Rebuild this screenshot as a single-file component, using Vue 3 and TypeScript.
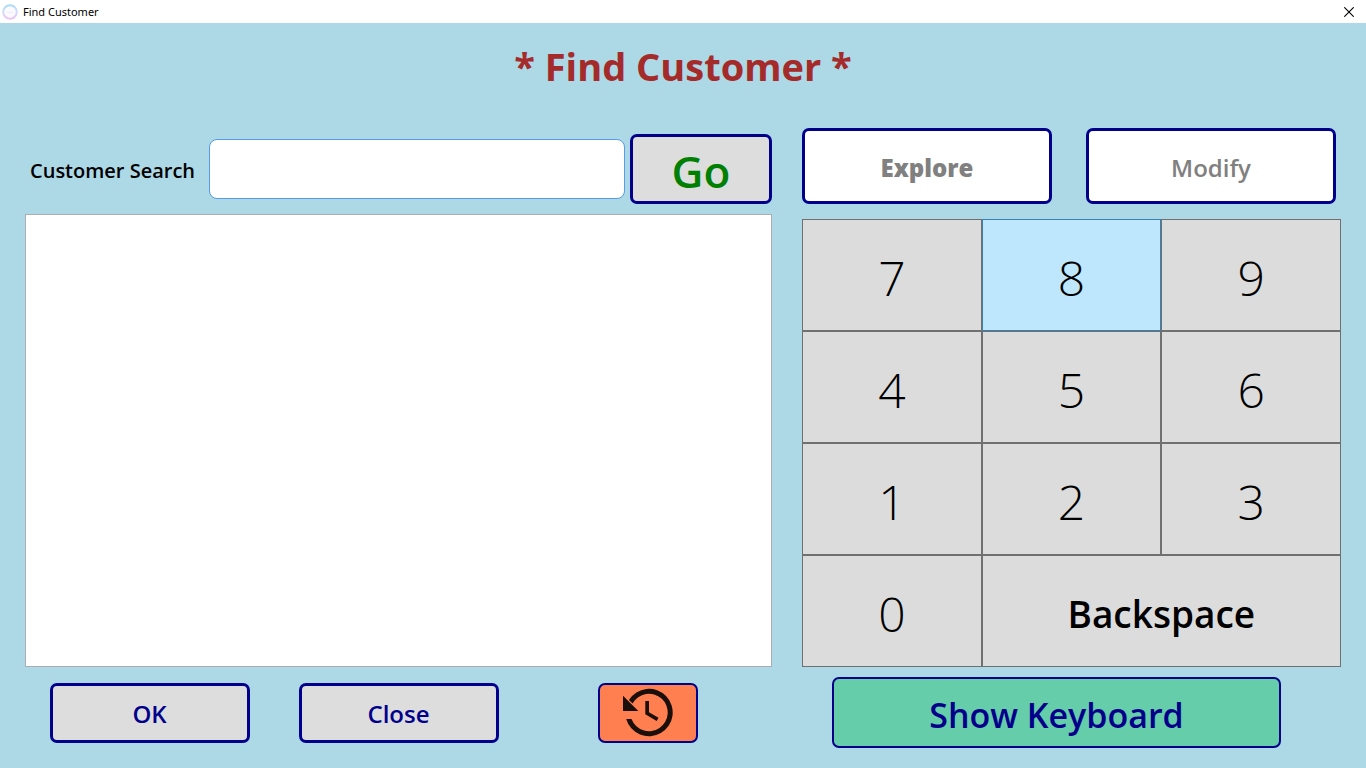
<script setup lang="ts">
import { ref } from 'vue'

const query = ref('')
const hoveredKey = ref('8')
const digits: string[] = ['7', '8', '9', '4', '5', '6', '1', '2', '3', '0']

function press(key: string): void {
  query.value += key
}

function backspace(): void {
  query.value = query.value.slice(0, -1)
}
</script>

<template>
  <div class="window">
    <header class="titlebar">
      <svg class="app-icon" viewBox="0 0 16 16" aria-hidden="true">
        <defs>
          <linearGradient id="ring" x1="0" y1="0" x2="0" y2="1">
            <stop offset="0" stop-color="#a9dcf8" />
            <stop offset="0.5" stop-color="#d3dcf8" />
            <stop offset="1" stop-color="#ecc6f5" />
          </linearGradient>
        </defs>
        <circle cx="8" cy="8" r="6.8" fill="#fcfaff" stroke="url(#ring)" stroke-width="2" />
        <path d="M5 8.5h6" stroke="#f1eefc" stroke-width="1.5" />
      </svg>
      <span class="caption">Find Customer</span>
      <button class="close-window" type="button" aria-label="Close window">
        <svg viewBox="0 0 10 10" aria-hidden="true">
          <path d="M0.3 0.3L9.7 9.7M9.7 0.3L0.3 9.7" stroke="#000" stroke-width="1.1" />
        </svg>
      </button>
    </header>

    <h1 class="heading">* Find Customer *</h1>

    <main class="content">
      <section class="search-panel">
        <form class="search-row" @submit.prevent>
          <label for="customer-search">Customer Search</label>
          <input id="customer-search" v-model="query" type="text" autocomplete="off" />
          <button class="framed go" type="submit">Go</button>
        </form>
        <div class="results" role="listbox" aria-label="Customers"></div>
        <div class="actions">
          <button class="framed action" type="button">OK</button>
          <button class="framed action" type="button">Close</button>
          <button class="framed history" type="button" aria-label="History">
            <svg viewBox="0 0 50 50" aria-hidden="true">
              <path d="M5.9 12A23.7 23.7 0 1 1 3.2 31H8.5A18.7 18.7 0 1 0 9.6 15.5Z" />
              <path d="M0 7.7L15.3 23H0Z" />
              <path d="M22.3 13H26V24.3L35.5 29.7L33.7 33L22.3 26.3Z" />
            </svg>
          </button>
        </div>
      </section>

      <section class="keypad-panel">
        <div class="modes">
          <button class="framed mode explore" type="button">Explore</button>
          <button class="framed mode" type="button">Modify</button>
        </div>
        <div class="keypad">
          <button
            v-for="digit in digits"
            :key="digit"
            class="key"
            :class="{ hovered: digit === hoveredKey }"
            type="button"
            @mouseenter="hoveredKey = digit"
            @click="press(digit)"
          >{{ digit }}</button>
          <button class="key backspace" type="button" @click="backspace">Backspace</button>
        </div>
        <button class="framed keyboard" type="button">Show Keyboard</button>
      </section>
    </main>
  </div>
</template>

<style>
body {
  margin: 0;
  background: #add8e6;
}
</style>

<style scoped>
.window {
  display: flex;
  flex-direction: column;
  min-height: 100vh;
  background: #add8e6;
  font-family: "Open Sans", "Noto Sans", sans-serif;
  color: #000;
}

.window * {
  box-sizing: border-box;
}

button,
input {
  margin: 0;
  padding: 0;
  font-family: inherit;
  color: inherit;
}

.titlebar {
  display: flex;
  align-items: center;
  height: 23px;
  padding: 0 12px 0 2px;
  background: #fff;
}

.app-icon {
  width: 16px;
  height: 16px;
}

.caption {
  flex: 1;
  margin-left: 5px;
  font-family: "Noto Sans", sans-serif;
  font-size: 11px;
  line-height: 23px;
}

.close-window {
  display: flex;
  border: 0;
  background: none;
}

.close-window svg {
  width: 10px;
  height: 10px;
}

.heading {
  margin: 0;
  height: 105px;
  line-height: 86px;
  text-align: center;
  font-size: 38px;
  font-weight: 700;
  color: #a52a2a;
}

.content {
  flex: 1;
  display: grid;
  grid-template-columns: 747fr 539fr;
  gap: 30px;
  padding: 0 25px 20px;
}

.search-panel,
.keypad-panel {
  display: flex;
  flex-direction: column;
  min-width: 0;
}

.search-row {
  display: flex;
  align-items: center;
  gap: 5px;
  height: 70px;
  margin-top: 6px;
}

.search-row label {
  width: 174px;
  margin-left: 5px;
  padding-top: 2px;
  font-size: 20px;
  font-weight: 600;
  white-space: nowrap;
}

.search-row input {
  flex: 1;
  min-width: 0;
  height: 60px;
  padding: 0 8px;
  border: 1px solid #569de5;
  border-radius: 8px;
  background: #fff;
  font-size: 32px;
}

.framed {
  border: 3px solid #00008b;
  border-radius: 7px;
  background: #ddd;
  color: #00008b;
}

.go {
  width: 142px;
  height: 70px;
  padding-top: 4px;
  font-size: 44px;
  line-height: 60px;
  font-weight: 600;
  color: #008000;
}

.results {
  flex: 1;
  margin-top: 10px;
  border: 1px solid #abadb3;
  background: #fff;
}

.actions {
  display: grid;
  grid-template-columns: repeat(3, 1fr);
  justify-items: center;
  margin: 16px 0 5px;
}

.action {
  width: 200px;
  height: 60px;
  font-size: 24px;
  font-weight: 600;
}

.history {
  display: flex;
  align-items: center;
  justify-content: center;
  width: 100px;
  height: 60px;
  border-width: 2px;
  background: #ff7f50;
}

.history svg {
  width: 50px;
  height: 50px;
  fill: #1a0f0a;
}

.modes {
  display: flex;
  justify-content: space-between;
  gap: 34px;
  margin-right: 5px;
}

.mode {
  flex: 1;
  height: 76px;
  padding-top: 2px;
  background: #fff;
  font-size: 24px;
  font-weight: 600;
  color: #808080;
}

.explore {
  font-weight: 800;
}

.keypad {
  flex: 1;
  display: grid;
  grid-template-columns: repeat(3, 1fr);
  grid-template-rows: repeat(4, minmax(80px, 1fr));
  margin-top: 15px;
}

.key {
  padding-top: 4px;
  border: 1px solid #707070;
  background: #dcdcdc;
  font-size: 48px;
  font-weight: 300;
}

.key.hovered {
  border-color: #3c7fb1;
  background: #bee6fd;
}

.key.backspace {
  grid-column: span 2;
  font-size: 37px;
  font-weight: 600;
}

.keyboard {
  height: 71px;
  margin: 10px 60px 0 30px;
  padding-top: 4px;
  border-width: 2px;
  background: #66cdaa;
  font-size: 34px;
  font-weight: 600;
}
</style>
